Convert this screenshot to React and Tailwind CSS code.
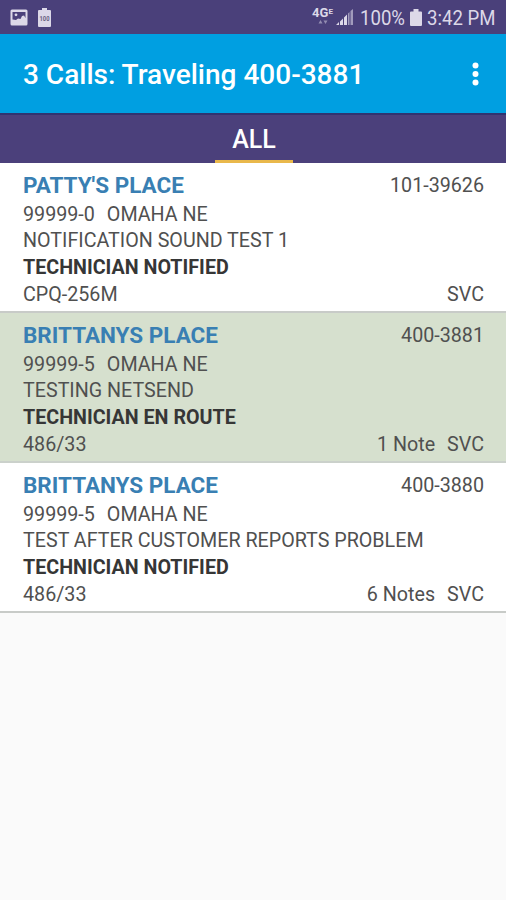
import React from 'react';

const calls = [
  { name: "PATTY'S PLACE", number: '101-39626', account: '99999-0', city: 'OMAHA NE', problem: 'NOTIFICATION SOUND TEST 1', status: 'TECHNICIAN NOTIFIED', equipment: 'CPQ-256M', notes: '', type: 'SVC' },
  { name: 'BRITTANYS PLACE', number: '400-3881', account: '99999-5', city: 'OMAHA NE', problem: 'TESTING NETSEND', status: 'TECHNICIAN EN ROUTE', equipment: '486/33', notes: '1 Note', type: 'SVC', active: true },
  { name: 'BRITTANYS PLACE', number: '400-3880', account: '99999-5', city: 'OMAHA NE', problem: 'TEST AFTER CUSTOMER REPORTS PROBLEM', status: 'TECHNICIAN NOTIFIED', equipment: '486/33', notes: '6 Notes', type: 'SVC' },
];

const StatusBar = () => (
  <div className="flex h-[34px] items-center justify-between bg-[#4a407a] pr-[11px] pl-[10px] text-[#dcd8e8]">
    <div className="flex items-center gap-[10px]">
      {/* Picture notification */}
      <svg width="18" height="17" viewBox="0 0 18 17">
        <rect x="0.5" y="0.5" width="17" height="16" rx="1.5" fill="currentColor" />
        <path d="M2.5 3h13v6l-1.5-2.5-2 .5-1.5 3-2.5-.5-2 1.5-3.5-.5z" fill="#4a407a" />
        <circle cx="6" cy="5.8" r="1.4" fill="currentColor" />
      </svg>
      {/* Battery notification */}
      <svg width="13" height="19" viewBox="0 0 13 19">
        <path d="M4 0h5v2h3q1 0 1 1v15q0 1-1 1H1q-1 0-1-1V3q0-1 1-1h3z" fill="currentColor" />
        <text x="6.5" y="12.5" textAnchor="middle" textLength="10" lengthAdjust="spacingAndGlyphs" fontSize="6.5" fontWeight="700" fill="#69617f">100</text>
      </svg>
    </div>
    <div className="flex h-full items-center">
      {/* Network type with the up/down traffic arrows below */}
      <div className="flex h-[22px] w-[23px] flex-col items-center">
        <div className="flex items-start font-bold">
          <span className="text-[13px] leading-[14px]">4G</span>
          <span className="pt-px text-[8px] leading-[10px]">E</span>
        </div>
        <svg width="10" height="4" viewBox="0 0 10 4" fill="currentColor" opacity="0.5">
          <path d="M2.5 0l2 3.5h-4zM5.5 0.5h4l-2 3.5z" />
        </svg>
      </div>
      <svg className="mr-[7px] ml-[2px]" width="17" height="17" viewBox="0 0 17 17" fill="currentColor">
        <path d="M0 16l3-3v3zM4 12.5l3-3V16H4zM8 8.5l3-3V16H8z" />
        <path d="M12 4.5l1.5-1.500v13H12zM14.5 2L17 0v16h-2.5z" opacity="0.6" />
      </svg>
      <span className="w-[45px] origin-left scale-x-[0.93] pt-px text-[20px] whitespace-nowrap">100%</span>
      <svg className="mr-[5px] ml-[5px]" width="12" height="17" viewBox="0 0 12 17" fill="currentColor">
        <path d="M3.5 0h5v2.5H11q1 0 1 1V16q0 1-1 1H1q-1 0-1-1V3.5q0-1 1-1h2.5z" />
      </svg>
      <span className="w-[68px] origin-left scale-x-[0.93] pt-px text-[20px] whitespace-nowrap">3:42 PM</span>
    </div>
  </div>
);

const CallRow = ({ call }) => (
  <div className={`h-[150px] border-b-2 pt-[9px] pr-[22px] pl-[23px] text-[19.7px] leading-[26.8px] text-[#505050] ${call.active ? 'border-[#cbd1cb] bg-[#d6e0ce]' : 'border-[#c8cbc8] bg-white'}`}>
    <div className="flex h-[29.5px] justify-between">
      <span className="text-[22.5px] font-bold text-[#397fb3]">{call.name}</span>
      <span className="pt-px">{call.number}</span>
    </div>
    <div className="flex gap-[12px]">
      <span>{call.account}</span>
      <span>{call.city}</span>
    </div>
    <div>{call.problem}</div>
    <div className="font-bold text-[#363636]">{call.status}</div>
    <div className="flex">
      <span className="flex-1">{call.equipment}</span>
      <span className="mr-[12px]">{call.notes}</span>
      <span>{call.type}</span>
    </div>
  </div>
);

export default function App() {
  return (
    <div className="h-[900px] w-[506px] overflow-hidden bg-[#fafafa] font-['Roboto',sans-serif]">
      <StatusBar />
      <div className="flex h-[79px] items-center justify-between bg-[#009fe1] pr-[27px] pl-[23px] text-white">
        <h1 className="pt-[3px] text-[28px] font-medium">3 Calls: Traveling 400-3881</h1>
        <svg width="7" height="24" viewBox="0 0 7 24" fill="currentColor">
          <circle cx="3.5" cy="3.5" r="3" />
          <circle cx="3.5" cy="12" r="3" />
          <circle cx="3.5" cy="20.5" r="3" />
        </svg>
      </div>
      <div className="flex h-[50px] justify-center border-t-2 border-[#313470] bg-[#4b407b] pl-[2px]">
        <div className="w-[78px] border-b-[3px] border-[#e9b84b] text-center text-[25px] leading-[50px] font-medium text-white">ALL</div>
      </div>
      {calls.map((call) => (
        <CallRow key={call.number} call={call} />
      ))}
    </div>
  );
}
